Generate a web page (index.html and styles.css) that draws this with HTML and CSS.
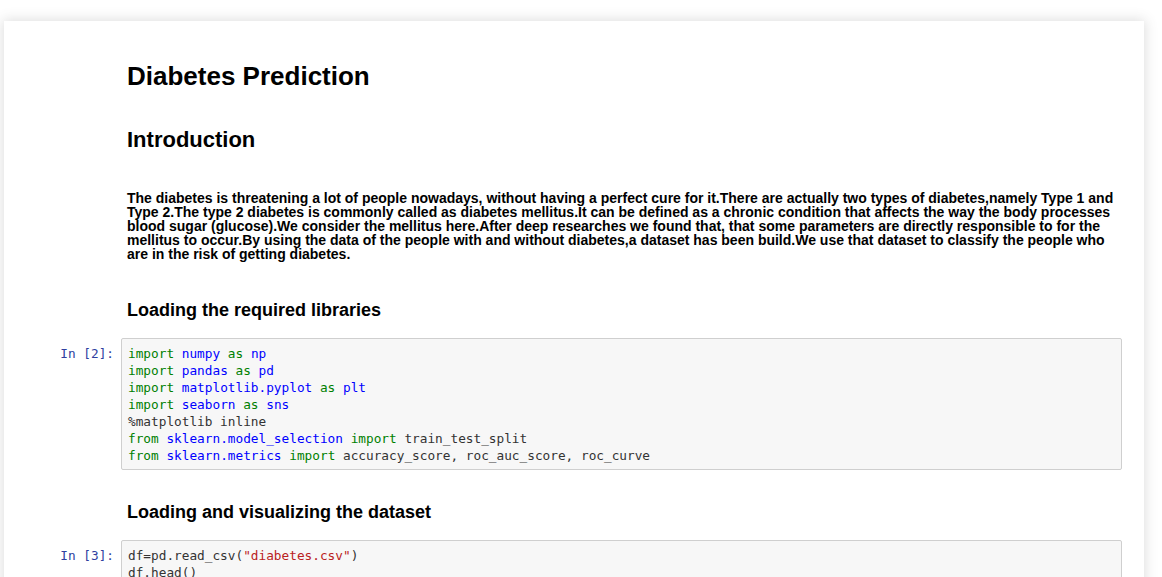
FILE: index.html
```html
<!DOCTYPE html>
<html>
<head>
<meta charset="utf-8">
<link rel="stylesheet" href="styles.css">
</head>
<body>
<div class="notebook">
  <div class="cell md">
    <div class="prompt"></div>
    <div class="render"><h1 class="title">Diabetes Prediction</h1></div>
  </div>
  <div class="cell md">
    <div class="prompt"></div>
    <div class="render"><h2 class="intro">Introduction</h2></div>
  </div>
  <div class="cell md">
    <div class="prompt"></div>
    <div class="render"><p class="para">The diabetes is threatening a lot of people nowadays, without having a perfect cure for it.There are actually two types of diabetes,namely Type 1 and Type 2.The type 2 diabetes is commonly called as diabetes mellitus.It can be defined as a chronic condition that affects the way the body processes blood sugar (glucose).We consider the mellitus here.After deep researches we found that, that some parameters are directly responsible to for the mellitus to occur.By using the data of the people with and without diabetes,a dataset has been build.We use that dataset to classify the people who are in the risk of getting diabetes.</p></div>
  </div>
  <div class="cell md">
    <div class="prompt"></div>
    <div class="render"><h3 class="sec sec-first">Loading the required libraries</h3></div>
  </div>
  <div class="cell code">
    <div class="prompt in">In&nbsp;[2]:</div>
    <div class="input"><pre><span class="kw">import</span> <span class="nn">numpy</span> <span class="kw">as</span> <span class="nn">np</span>
<span class="kw">import</span> <span class="nn">pandas</span> <span class="kw">as</span> <span class="nn">pd</span>
<span class="kw">import</span> <span class="nn">matplotlib.pyplot</span> <span class="kw">as</span> <span class="nn">plt</span>
<span class="kw">import</span> <span class="nn">seaborn</span> <span class="kw">as</span> <span class="nn">sns</span>
%matplotlib inline
<span class="kw">from</span> <span class="nn">sklearn.model_selection</span> <span class="kw">import</span> train_test_split
<span class="kw">from</span> <span class="nn">sklearn.metrics</span> <span class="kw">import</span> accuracy_score, roc_auc_score, roc_curve</pre></div>
  </div>
  <div class="cell md">
    <div class="prompt"></div>
    <div class="render"><h3 class="sec sec-second">Loading and visualizing the dataset</h3></div>
  </div>
  <div class="cell code">
    <div class="prompt in">In&nbsp;[3]:</div>
    <div class="input"><pre>df=pd.read_csv(<span class="s">"diabetes.csv"</span>)
df.head()</pre></div>
  </div>
</div>
</body>
</html>
```
FILE: styles.css
```css
html, body {
  margin: 0;
  padding: 0;
  background: #ffffff;
  overflow: hidden;
}
body {
  height: 577px;
}
.notebook {
  margin: 21px 18px 0 4px;
  width: 1140px;
  box-sizing: border-box;
  padding: 0 22px 40px 15px;
  background: #fff;
  box-shadow: 0 0 12px 1px rgba(87, 87, 87, 0.2);
  min-height: 600px;
  font-family: "Liberation Sans", Arial, sans-serif;
  color: #000;
}
.cell {
  display: flex;
  align-items: flex-start;
}
.prompt {
  width: 102px;
  flex: 0 0 102px;
  box-sizing: border-box;
  padding-right: 7px;
  text-align: right;
  font-family: "DejaVu Sans Mono", monospace;
  font-size: 12.75px;
  line-height: 17px;
  color: #303f9f;
}
.prompt.in {
  padding-top: 7px;
}
.render {
  flex: 1;
  padding: 0 7px 0 6px;
}
.title {
  margin: 40px 0 0;
  font-size: 26px;
  line-height: 31px;
  font-weight: bold;
}
.intro {
  margin: 35px 0 0;
  font-size: 22px;
  line-height: 26px;
  font-weight: bold;
}
.para {
  margin: 38px 0 0;
  font-size: 14px;
  line-height: 14px;
  font-weight: bold;
}
.sec {
  font-size: 18px;
  line-height: 22px;
  font-weight: bold;
}
.sec-first {
  margin: 38px 0 17px;
}
.sec-second {
  margin: 31px 0 17px;
}
.input {
  flex: 1;
  border: 1px solid #cfcfcf;
  border-radius: 2px;
  background: #f7f7f7;
  padding: 6px 6px 5px 6px;
}
.input pre {
  margin: 0;
  font-family: "DejaVu Sans Mono", monospace;
  font-size: 12.75px;
  line-height: 17px;
  color: #333;
}
.kw { color: #008000; }
.nn { color: #0000ff; }
.s { color: #ba2121; }
```
